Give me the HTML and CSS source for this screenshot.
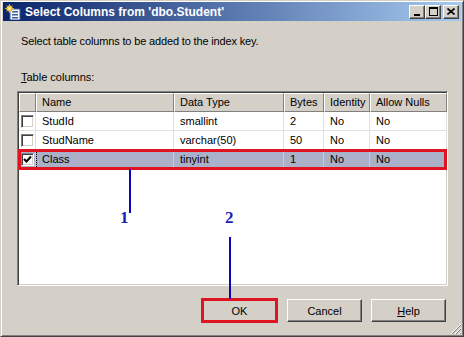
FILE: index.html
```html
<!DOCTYPE html>
<html lang="en">
<head>
    <meta charset="UTF-8">
    <title>Select Columns from 'dbo.Student'</title>
    <link rel="stylesheet" href="styles.css">
</head>
<body>
    <div class="dialog">
        <div class="titlebar">
            <svg class="title-icon" width="16" height="16" viewBox="0 0 16 16">
                <rect x="5" y="5" width="10" height="11" fill="#f4f8ff" stroke="#3a5a9a" stroke-width="1"/>
                <rect x="7" y="7" width="6" height="1.5" fill="#3a5a9a"/>
                <rect x="7" y="10" width="6" height="1.5" fill="#3a5a9a"/>
                <rect x="7" y="13" width="6" height="1.5" fill="#3a5a9a"/>
                <circle cx="4.5" cy="4.5" r="3" fill="#ffd23a"/>
                <path d="M4.5 0v9M0 4.5h9M1.5 1.5l6 6M7.5 1.5l-6 6" stroke="#f2a800" stroke-width="1"/>
                <circle cx="4.5" cy="4.5" r="1.6" fill="#fff6a0"/>
            </svg>
            <span class="title-text">Select Columns from 'dbo.Student'</span>
            <div class="win-buttons">
                <div class="win-btn">
                    <svg width="8" height="8" viewBox="0 0 8 8"><rect x="1" y="6" width="6" height="2" fill="#000"/></svg>
                </div>
                <div class="win-btn">
                    <svg width="9" height="9" viewBox="0 0 9 9"><rect x="0.5" y="0.5" width="8" height="8" fill="none" stroke="#000"/><rect x="0" y="0" width="9" height="2" fill="#000"/></svg>
                </div>
                <div class="win-btn close">
                    <svg width="8" height="7" viewBox="0 0 8 7"><path d="M0.5 0.5l7 6M7.5 0.5l-7 6" stroke="#000" stroke-width="1.6"/></svg>
                </div>
            </div>
        </div>

        <p class="intro">Select table columns to be added to the index key.</p>
        <p class="label"><u>T</u>able columns:</p>

        <div class="grid">
            <div class="row head">
                <div class="cell chk"></div>
                <div class="cell">Name</div>
                <div class="cell">Data Type</div>
                <div class="cell">Bytes</div>
                <div class="cell">Identity</div>
                <div class="cell">Allow Nulls</div>
            </div>
            <div class="row">
                <div class="cell chk"><span class="box"></span></div>
                <div class="cell">StudId</div>
                <div class="cell">smallint</div>
                <div class="cell">2</div>
                <div class="cell">No</div>
                <div class="cell">No</div>
            </div>
            <div class="row">
                <div class="cell chk"><span class="box"></span></div>
                <div class="cell">StudName</div>
                <div class="cell">varchar(50)</div>
                <div class="cell">50</div>
                <div class="cell">No</div>
                <div class="cell">No</div>
            </div>
            <div class="row selected">
                <div class="cell chk">
                    <span class="box">
                        <svg width="9" height="9" viewBox="0 0 9 9"><path d="M1 4l2.5 2.5L8 1.5" fill="none" stroke="#000" stroke-width="2"/></svg>
                    </span>
                </div>
                <div class="cell focus">Class</div>
                <div class="cell">tinyint</div>
                <div class="cell">1</div>
                <div class="cell">No</div>
                <div class="cell">No</div>
            </div>
        </div>

        <div class="buttons">
            <button class="btn ok">OK</button>
            <button class="btn">Cancel</button>
            <button class="btn"><u>H</u>elp</button>
        </div>

        <svg class="grip" width="12" height="12" viewBox="0 0 12 12">
            <path d="M11 1L1 11M11 5L5 11M11 9L9 11" stroke="#fff" stroke-width="1"/>
            <path d="M11 2L2 11M11 6L6 11M11 10L10 11" stroke="#808080" stroke-width="1"/>
        </svg>

        <!-- annotations -->
        <div class="mark line-1"></div>
        <div class="mark-num num-1">1</div>
        <div class="mark-num num-2">2</div>
        <div class="mark line-2"></div>
    </div>
</body>
</html>
```

FILE: styles.css
```css
html, body {
    margin: 0;
    padding: 0;
}
body {
    width: 464px;
    height: 337px;
    overflow: hidden;
    font-family: "Liberation Sans", Arial, sans-serif;
    font-size: 11px;
    color: #000;
}
.dialog {
    position: relative;
    width: 464px;
    height: 337px;
    box-sizing: border-box;
    background: #d4d0c8;
    border-top: 1px solid #d4d0c8;
    border-left: 1px solid #d4d0c8;
    border-right: 1px solid #404040;
    border-bottom: 1px solid #404040;
    box-shadow: inset 1px 1px 0 #fff, inset -1px -1px 0 #808080;
    padding: 1px 2px 0 2px;
}
.titlebar {
    height: 19px;
    display: flex;
    align-items: center;
    padding: 0 2px 0 2px;
    background: linear-gradient(to right, #0a246a, #a6caf0);
}
.title-icon {
    flex: none;
    margin-right: 4px;
}
.title-text {
    color: #fff;
    font-weight: 700;
    font-size: 12px;
    flex: 1;
    white-space: nowrap;
}
.win-buttons {
    display: flex;
    align-items: center;
}
.win-btn {
    width: 16px;
    height: 14px;
    box-sizing: border-box;
    background: #d4d0c8;
    border-top: 1px solid #fff;
    border-left: 1px solid #fff;
    border-right: 1px solid #404040;
    border-bottom: 1px solid #404040;
    box-shadow: inset -1px -1px 0 #808080;
    display: flex;
    align-items: center;
    justify-content: center;
}
.win-btn.close {
    margin-left: 2px;
}

.intro {
    margin: 14px 0 0 18px;
    line-height: 13px;
    letter-spacing: -0.15px;
}
.label {
    margin: 23px 0 0 18px;
    line-height: 13px;
}

.grid {
    margin: 7px 0 0 14px;
    width: 431px;
    height: 195px;
    box-sizing: border-box;
    background: #fff;
    border-top: 1px solid #808080;
    border-left: 1px solid #808080;
    border-right: 1px solid #fff;
    border-bottom: 1px solid #fff;
    box-shadow: inset 1px 1px 0 #404040, inset -1px -1px 0 #d4d0c8;
    padding: 1px 1px 0 1px;
}
.row {
    display: grid;
    grid-template-columns: 17px 138px 110px 40px 46px 77px;
    height: 19px;
}
.cell {
    box-sizing: border-box;
    border-right: 1px solid #e2e0da;
    border-bottom: 1px solid #e2e0da;
    padding-left: 6px;
    line-height: 18px;
    white-space: nowrap;
    overflow: hidden;
}
.head .cell {
    background: #d4d0c8;
    border-top: 1px solid #fff;
    border-left: 1px solid #fff;
    border-right: 1px solid #808080;
    border-bottom: 1px solid #808080;
    padding-left: 5px;
    line-height: 17px;
}
.chk {
    padding: 0;
    display: flex;
    align-items: center;
    justify-content: center;
}
.box {
    width: 13px;
    height: 13px;
    box-sizing: border-box;
    background: #fff;
    border-top: 1px solid #808080;
    border-left: 1px solid #808080;
    border-right: 1px solid #fff;
    border-bottom: 1px solid #fff;
    box-shadow: inset 1px 1px 0 #404040, inset -1px -1px 0 #d4d0c8;
    display: flex;
    align-items: center;
    justify-content: center;
}
.selected {
    background: #a9b0c8;
    outline: 3px solid #e01420;
    outline-offset: -2px;
}
.selected .cell {
    border-color: #c6cbdb;
}
.selected .focus {
    border-left: 1px dotted #000;
    padding-left: 5px;
}

.buttons {
    display: flex;
    justify-content: flex-end;
    gap: 9px;
    margin: 13px 15px 0 0;
}
.btn {
    width: 75px;
    height: 23px;
    box-sizing: border-box;
    font-family: "Liberation Sans", Arial, sans-serif;
    font-size: 11px;
    color: #000;
    background: #d4d0c8;
    border-top: 1px solid #fff;
    border-left: 1px solid #fff;
    border-right: 1px solid #404040;
    border-bottom: 1px solid #404040;
    box-shadow: inset -1px -1px 0 #808080;
    padding: 0;
}
.btn.ok {
    margin-right: 1px;
    outline: 3px solid #e01420;
    outline-offset: -2px;
}

.grip {
    position: absolute;
    right: 1px;
    bottom: 1px;
}

.mark {
    position: absolute;
    width: 2px;
    background: #0a0ab4;
}
.line-1 {
    left: 128px;
    top: 168px;
    height: 44px;
}
.line-2 {
    left: 228px;
    top: 236px;
    height: 62px;
}
.mark-num {
    position: absolute;
    font-family: "Liberation Serif", "Times New Roman", serif;
    font-weight: 700;
    font-size: 17px;
    line-height: 17px;
    color: #1c1cb8;
}
.num-1 {
    left: 119px;
    top: 208px;
}
.num-2 {
    left: 224px;
    top: 208px;
}
```
